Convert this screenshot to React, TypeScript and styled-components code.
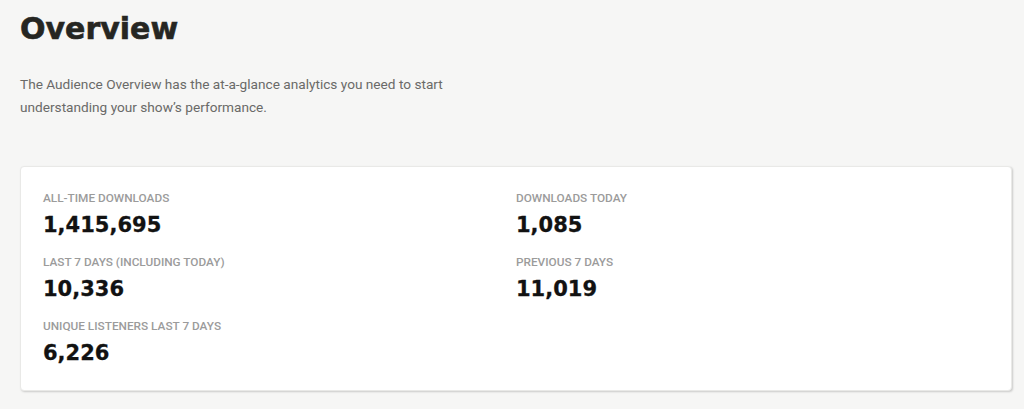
import React from "react";
import styled, { createGlobalStyle } from "styled-components";

const GlobalStyle = createGlobalStyle`
  html, body {
    margin: 0;
    padding: 0;
    background: #f6f6f5;
  }
  body {
    font-family: Roboto, "Liberation Sans", sans-serif;
  }
`;

const Page = styled.main`
  padding: 11px 12px 19px 20px;
`;

const Title = styled.h1`
  margin: 0;
  font-family: "DejaVu Sans", "Liberation Sans", sans-serif;
  font-weight: 700;
  font-size: 30px;
  line-height: 36px;
  color: #262622;
  -webkit-text-stroke: 0.6px #262622;
`;

const Intro = styled.p`
  margin: 26px 0 0;
  max-width: 440px;
  font-family: Roboto, sans-serif;
  font-size: 13.65px;
  line-height: 23px;
  color: #6a6a68;
`;

const Card = styled.section`
  margin-top: 47px;
  background: #ffffff;
  border: 1px solid #e9e9e7;
  border-radius: 4px;
  box-shadow: 1px 1px 2px rgba(0, 0, 0, 0.18);
  padding: 24px 22px 24px 22px;
  display: grid;
  grid-template-columns: 1fr 1fr;
  row-gap: 17px;
`;

const Stat = styled.div`
  display: flex;
  flex-direction: column;
  gap: 7px;
`;

const Label = styled.div`
  font-family: Roboto, sans-serif;
  font-weight: 500;
  font-size: 11.8px;
  line-height: 14px;
  text-transform: uppercase;
  color: #9b9b9b;
`;

const Value = styled.div`
  font-family: "DejaVu Sans", "Liberation Sans", sans-serif;
  font-weight: 700;
  font-size: 21px;
  line-height: 26px;
  color: #121212;
  -webkit-text-stroke: 0.3px #121212;
`;

const stats = [
  { label: "All-time downloads", value: "1,415,695" },
  { label: "Downloads today", value: "1,085" },
  { label: "Last 7 days (including today)", value: "10,336" },
  { label: "Previous 7 days", value: "11,019" },
  { label: "Unique listeners last 7 days", value: "6,226" },
];

export default function App() {
  return (
    <>
      <GlobalStyle />
      <Page>
        <Title>Overview</Title>
        <Intro>
          The Audience Overview has the at-a-glance analytics you need to start
          understanding your show’s performance.
        </Intro>
        <Card>
          {stats.map((s) => (
            <Stat key={s.label}>
              <Label>{s.label}</Label>
              <Value>{s.value}</Value>
            </Stat>
          ))}
        </Card>
      </Page>
    </>
  );
}
